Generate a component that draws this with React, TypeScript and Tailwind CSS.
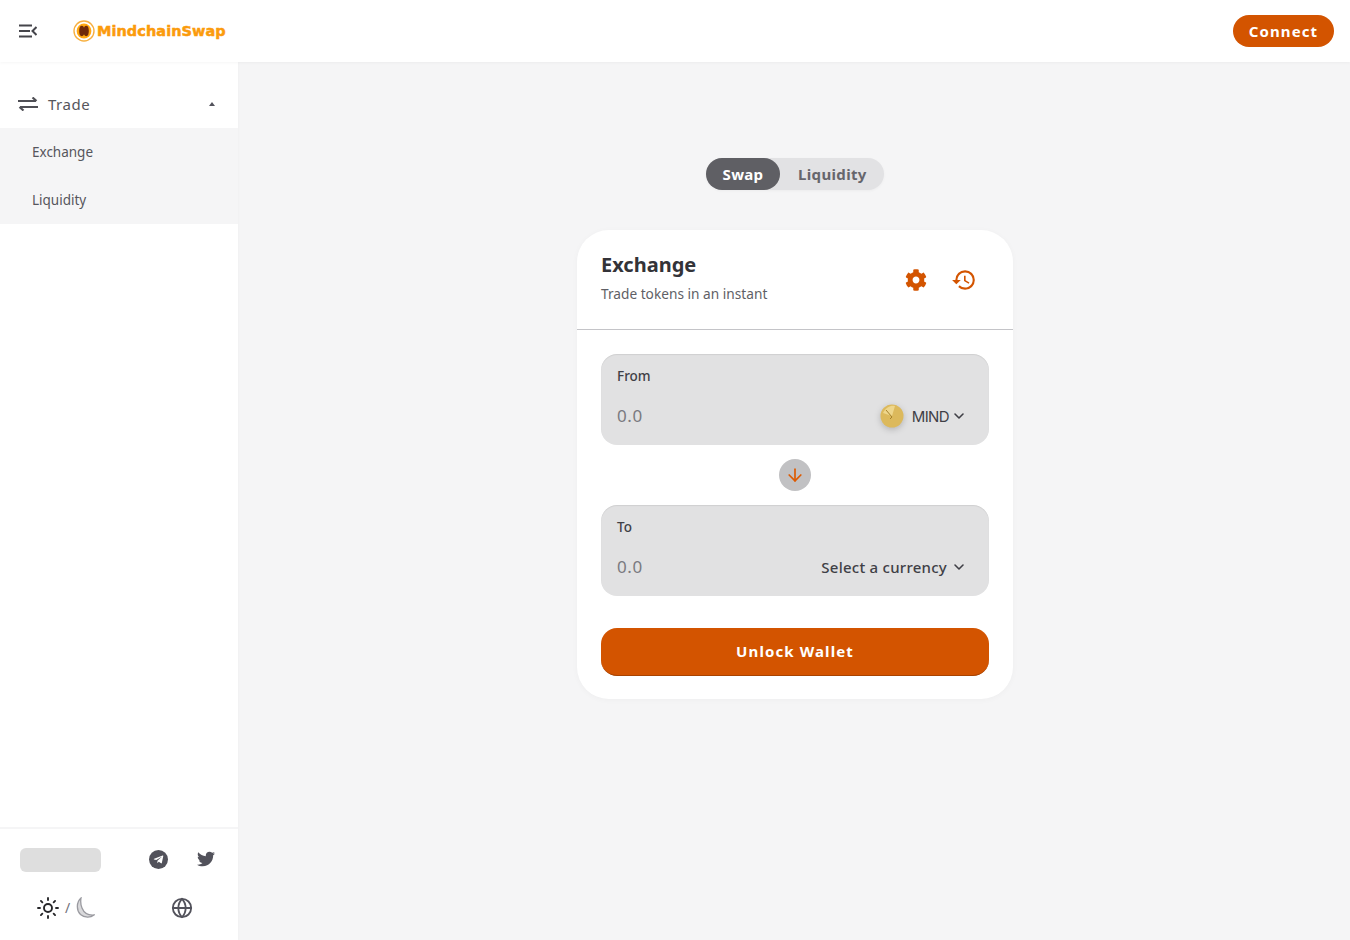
import React from "react";
import { ChevronDown, ArrowDown, Sun, Globe } from "lucide-react";
import { FaCog, FaTelegramPlane, FaTwitter } from "react-icons/fa";
import { MdHistory } from "react-icons/md";

const font = "font-['Noto_Sans',sans-serif]";

const Logo = () => (
  <div className="flex items-center gap-[2px]">
    <svg width="22" height="22" viewBox="0 0 22 22">
      <circle cx="11" cy="11" r="10" fill="#fff" stroke="#f7b040" strokeWidth="1.4" />
      <circle cx="11" cy="11" r="7.4" fill="#ffa812" />
      <ellipse cx="8.8" cy="11" rx="2.6" ry="5.2" fill="#6f2a0a" />
      <ellipse cx="13.2" cy="11" rx="2.6" ry="5.2" fill="#6f2a0a" />
    </svg>
    <span className="text-[14.5px] leading-none font-bold tracking-[0.05px] text-[#fb9b0c] font-['DejaVu_Sans',sans-serif] [-webkit-text-stroke:0.5px_#fb9b0c]">
      MindchainSwap
    </span>
  </div>
);

const TradeIcon = () => (
  <svg width="20" height="14" viewBox="0 0 20 14" fill="none" stroke="#4f4f55" strokeWidth="2.2">
    <path d="M0 4h18M14.5 0.5 18.5 4" />
    <path d="M20 10H2M5.5 13.5 1.5 10" />
  </svg>
);

const MenuIcon = () => (
  <svg width="18" height="14" viewBox="0 0 18 14" fill="none" stroke="#45454b" strokeWidth="2">
    <path d="M0 1.5h13M0 7h11M0 12.5h13" />
    <path d="M17.5 3 13.5 7l4 4" />
  </svg>
);

const MoonIcon = () => (
  <svg width="22" height="22" viewBox="0 0 22 22">
    <path
      d="M8 1C3.500 5 3 13 7.500 17.500c4 3.500 10 3.500 13.500 0.500-5.500 0.500-10-2-12-7C7.500 7.500 7.500 4 8 1Z"
      fill="#d9d9db"
      stroke="#9a9aa0"
      strokeWidth="1.3"
    />
  </svg>
);

const Coin = () => (
  <svg width="24" height="24" viewBox="0 0 24 24" className="drop-shadow-[0_2px_3px_rgba(0,0,0,0.2)]">
    <circle cx="12" cy="12" r="11.500" fill="#dcb95c" />
    <path d="M3 9C6 3 11 1 15 2L12 12Z" fill="#eed68c" />
    <path d="M6 6 12 13 10 15" fill="none" stroke="#a5812c" strokeWidth="1" />
  </svg>
);

const SwapBox = ({ label, right }: { label: string; right: React.ReactNode }) => (
  <div className="h-[91px] rounded-2xl bg-[#e1e1e2] shadow-[inset_0_1px_1px_rgba(0,0,0,0.08)] px-4 pt-[13px]">
    <div className="text-[13.5px] leading-[18px] font-medium text-[#3f3f46]">{label}</div>
    <div className="mt-[19px] flex items-center justify-between h-6">
      <span className="text-[17px] tracking-[0.6px] text-[#7a7a80]">0.0</span>
      <div className="flex items-center text-[#3f3f46] pr-[6px]">{right}</div>
    </div>
  </div>
);

export default function App() {
  return (
    <div className={`${font} w-[1350px] h-[940px] overflow-hidden flex flex-col bg-[#f5f5f6]`}>
      {/* Header */}
      <header className="h-[62px] shrink-0 bg-white flex items-center pl-[19px] pr-4 shadow-[0_1px_3px_rgba(0,0,0,0.04)] z-10">
        <MenuIcon />
        <div className="ml-9">
          <Logo />
        </div>
        <button className="ml-auto w-[101px] h-8 rounded-full bg-[#d35400] text-white text-[15px] font-bold tracking-[1.1px] leading-none">
          Connect
        </button>
      </header>

      <div className="flex-1 flex min-h-0">
        {/* Sidebar */}
        <aside className="w-[238px] shrink-0 bg-white flex flex-col justify-between shadow-[1px_0_2px_rgba(0,0,0,0.02)]">
          <nav className="pt-[18px]">
            <div className="h-12 flex items-center pl-[18px] pr-[23px] text-[#56565c]">
              <TradeIcon />
              <span className="ml-[10px] text-[15px] tracking-[0.5px]">Trade</span>
              <span className="ml-auto w-0 h-0 border-x-[3.5px] border-x-transparent border-b-[4px] border-b-[#52525b]" />
            </div>
            <div className="bg-[#f5f5f6] text-[13.5px] text-[#56565c]">
              <div className="h-12 flex items-center pl-8 pt-px">Exchange</div>
              <div className="h-12 flex items-center pl-8 pt-px">Liquidity</div>
            </div>
          </nav>

          <footer className="h-[113px] border-t-2 border-[#f5f5f6] px-5 pt-[18px]">
            <div className="flex items-center h-6">
              <div className="w-[81px] h-6 mt-[2px] rounded-md bg-[#dedede]" />
              <div className="ml-[48px] w-[19px] h-[19px] rounded-full bg-[#52525b] flex items-center justify-center">
                <FaTelegramPlane className="text-white text-[11px] -ml-px" />
              </div>
              <FaTwitter className="ml-[29px] text-[#52525b] text-[18px]" />
            </div>
            <div className="flex items-center mt-[25px] h-6 pl-[16px]">
              <Sun size={24} strokeWidth={1.9} className="text-[#27272a]" />
              <span className="ml-[5px] mr-[3px] text-sm text-[#71717a]">/</span>
              <MoonIcon />
              <Globe size={22} strokeWidth={2} className="ml-[76px] text-[#52525b]" />
            </div>
          </footer>
        </aside>

        {/* Main */}
        <main className="flex-1 flex flex-col items-center pt-24 pl-[2px]">
          <div className="w-[178px] h-8 rounded-full bg-[#e2e2e4] shadow-[0_1px_3px_rgba(0,0,0,0.04)] flex items-center text-[15px] font-bold leading-none">
            <div className="w-[74px] h-8 rounded-full bg-[#5f5f64] text-white flex items-center justify-center tracking-[0.3px]">
              Swap
            </div>
            <div className="ml-[18px] text-[#66666c] tracking-[0.35px]">Liquidity</div>
          </div>

          <section className="mt-10 w-[436px] h-[469px] rounded-[32px] bg-white shadow-[0_1px_6px_rgba(0,0,0,0.03)]">
            <div className="h-[100px] border-b border-[#c4c4c8] flex items-start pl-6 pr-[36px]">
              <div className="pt-[21px]">
                <h2 className="text-xl leading-7 font-bold text-[#333338]">Exchange</h2>
                <p className="mt-[6px] text-[13.7px] leading-[18px] text-[#5f5f66]">Trade tokens in an instant</p>
              </div>
              <FaCog className="ml-auto mt-[39px] text-[#d35400] text-[22px]" />
              <MdHistory className="ml-[24px] mt-[37px] text-[#d35400] text-[26px]" />
            </div>

            <div className="px-6 pt-6">
              <SwapBox
                label="From"
                right={
                  <>
                    <Coin />
                    <span className="ml-[8px] text-[15px] leading-none font-['Inter',sans-serif] tracking-[-0.6px]">MIND</span>
                    <ChevronDown size={16} strokeWidth={2.4} className="ml-[2px]" />
                  </>
                }
              />
              <div className="h-[60px] flex items-center justify-center">
                <div className="w-8 h-8 rounded-full bg-[#c1c1c3] flex items-center justify-center">
                  <ArrowDown size={20} strokeWidth={2} className="text-[#dd5a00]" />
                </div>
              </div>
              <SwapBox
                label="To"
                right={
                  <>
                    <span className="text-[15px] font-medium tracking-[0.25px] leading-none">Select a currency</span>
                    <ChevronDown size={16} strokeWidth={2.4} className="ml-[4px]" />
                  </>
                }
              />
              <button className="mt-8 w-full h-12 rounded-2xl bg-[#d35400] border-b border-[#a84300] text-white text-[15px] font-bold tracking-[1.1px]">
                Unlock Wallet
              </button>
            </div>
          </section>
        </main>
      </div>
    </div>
  );
}
